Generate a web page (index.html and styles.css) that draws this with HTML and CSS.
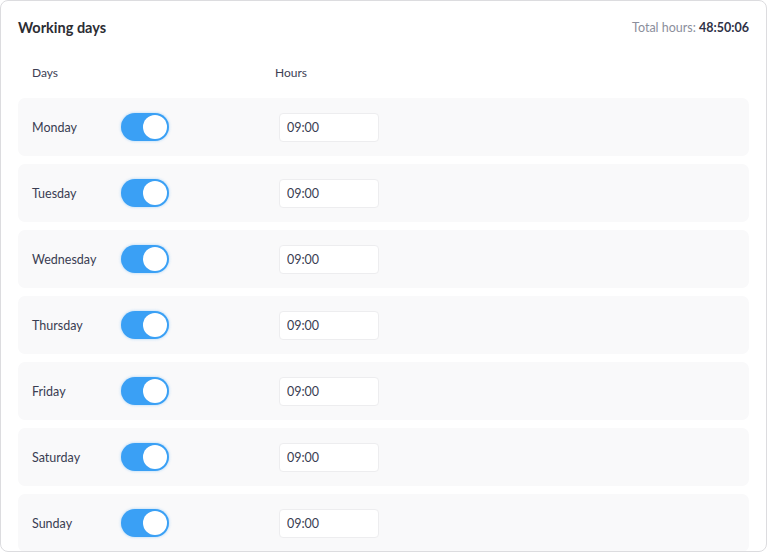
FILE: index.html
```html
<!DOCTYPE html>
<html lang="en">
<head>
    <meta charset="UTF-8">
    <meta name="viewport" content="width=device-width, initial-scale=1.0">
    <title>Working days</title>
    <link rel="stylesheet" href="styles.css">
</head>

<body>
    <div class="card">
        <div class="card-header">
            <h2>Working days</h2>
            <p class="total">Total hours: <strong>48:50:06</strong></p>
        </div>
        <div class="columns">
            <span class="col-days">Days</span>
            <span>Hours</span>
        </div>
        <div class="days">
            <div class="day">
                <div class="col-days">
                    <span class="day-name">Monday</span>
                    <label class="switch"><input type="checkbox" checked><span class="slider"></span></label>
                </div>
                <input class="hours" type="text" value="09:00">
            </div>
            <div class="day">
                <div class="col-days">
                    <span class="day-name">Tuesday</span>
                    <label class="switch"><input type="checkbox" checked><span class="slider"></span></label>
                </div>
                <input class="hours" type="text" value="09:00">
            </div>
            <div class="day">
                <div class="col-days">
                    <span class="day-name">Wednesday</span>
                    <label class="switch"><input type="checkbox" checked><span class="slider"></span></label>
                </div>
                <input class="hours" type="text" value="09:00">
            </div>
            <div class="day">
                <div class="col-days">
                    <span class="day-name">Thursday</span>
                    <label class="switch"><input type="checkbox" checked><span class="slider"></span></label>
                </div>
                <input class="hours" type="text" value="09:00">
            </div>
            <div class="day">
                <div class="col-days">
                    <span class="day-name">Friday</span>
                    <label class="switch"><input type="checkbox" checked><span class="slider"></span></label>
                </div>
                <input class="hours" type="text" value="09:00">
            </div>
            <div class="day">
                <div class="col-days">
                    <span class="day-name">Saturday</span>
                    <label class="switch"><input type="checkbox" checked><span class="slider"></span></label>
                </div>
                <input class="hours" type="text" value="09:00">
            </div>
            <div class="day">
                <div class="col-days">
                    <span class="day-name">Sunday</span>
                    <label class="switch"><input type="checkbox" checked><span class="slider"></span></label>
                </div>
                <input class="hours" type="text" value="09:00">
            </div>
        </div>
    </div>
</body>
</html>
```

FILE: styles.css
```css
body {
    font-family: "Lato", "Open Sans", sans-serif;
    background-color: #ffffff;
    margin: 0;
    color: #34374d;
}

.card {
    width: 767px;
    height: 552px;
    box-sizing: border-box;
    border: 1px solid #dcdcdf;
    border-radius: 8px;
    padding: 0 17px;
    overflow: hidden;
}

.card-header {
    display: flex;
    justify-content: space-between;
    align-items: center;
    height: 52px;
}

.card-header h2 {
    margin: 0;
    font-size: 14.5px;
    font-weight: 700;
    color: #2c2d33;
}

.total {
    margin: 0;
    font-size: 12.5px;
    color: #8b8e9c;
}

.total strong {
    color: #2f3247;
    font-weight: 700;
}

.columns {
    display: flex;
    align-items: center;
    height: 38px;
    padding: 0 14px;
    font-size: 12px;
    color: #3d4054;
}

.col-days {
    width: 243px;
    display: flex;
    align-items: center;
    flex-shrink: 0;
}

.days {
    margin-top: 7px;
    display: flex;
    flex-direction: column;
    gap: 8px;
}

.day {
    display: flex;
    align-items: center;
    height: 58px;
    padding: 0 14px;
    background-color: #f9f9fa;
    border-radius: 7px;
    flex-shrink: 0;
}

.day-name {
    width: 89px;
    font-size: 12.5px;
    color: #3a3d52;
}

.switch {
    position: relative;
    width: 48px;
    height: 28px;
    display: inline-block;
}

.switch input {
    display: none;
}

.slider {
    position: absolute;
    inset: 0;
    background-color: #3aa0f5;
    border-radius: 14px;
    box-shadow: 0 0 3px rgba(58, 160, 245, 0.45);
}

.slider::after {
    content: "";
    position: absolute;
    top: 2px;
    right: 2px;
    width: 24px;
    height: 24px;
    border-radius: 50%;
    background-color: #ffffff;
}

.hours {
    width: 100px;
    height: 29px;
    margin-left: 4px;
    box-sizing: border-box;
    border: 1px solid #ededef;
    border-radius: 4px;
    background-color: #ffffff;
    padding: 0 7px;
    font-family: "Lato", "Open Sans", sans-serif;
    font-size: 12.5px;
    color: #3a3d52;
    outline: none;
}
```
